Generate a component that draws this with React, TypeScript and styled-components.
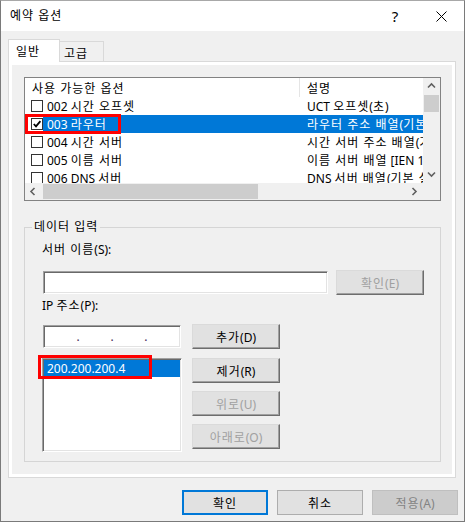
import styled, { createGlobalStyle, css } from "styled-components";

const uiFont = `"Segoe UI", "Noto Sans", "Noto Sans CJK KR", sans-serif`;

const GlobalStyle = createGlobalStyle`
  html, body {
    margin: 0;
    padding: 0;
    background: #f0f0f0;
  }
  body {
    font-family: ${uiFont};
    font-size: 12px;
    color: #000;
  }
  *, *::before, *::after {
    box-sizing: border-box;
  }
`;

// 한글 글자 간격 (맑은 고딕 폭에 맞춤)
const Hangul = styled.span`
  letter-spacing: 1px;
`;

function K({ children }: { children: string }) {
  const parts = children.split(/([가-힣]+(?:\s+[가-힣]+)*)/);
  return <>{parts.map((p, i) => (i % 2 === 1 ? <Hangul key={i}>{p}</Hangul> : p))}</>;
}

// 창 틀
const Window = styled.div`
  display: flex;
  flex-direction: column;
  width: 465px;
  height: 522px;
  background: #f0f0f0;
  border: 1px solid #7a7a7a;
  border-top-color: #a8a8a8;
`;

const TitleBar = styled.div`
  display: flex;
  align-items: center;
  height: 30px;
  padding-left: 9px;
  background: #ffffff;
`;

const Title = styled.span`
  flex: 1;
  line-height: 16px;
`;

const TitleButton = styled.div`
  display: flex;
  align-items: center;
  justify-content: center;
  width: 46px;
  height: 30px;
  font-size: 15px;
`;

const Body = styled.div`
  flex: 1;
  display: flex;
  flex-direction: column;
  padding: 8px 6px 6px 7px;
`;

// 탭
const TabStrip = styled.div`
  display: flex;
  align-items: flex-end;
  height: 22px;
`;

const Tab = styled.div<{ $active?: boolean }>`
  position: relative;
  z-index: 1;
  display: flex;
  align-items: center;
  border: 1px solid #d9d9d9;
  border-bottom: none;

  ${(p) =>
    p.$active
      ? css`
          width: 52px;
          height: 23px;
          margin-bottom: -1px;
          padding-left: 7px;
          background: #ffffff;
        `
      : css`
          width: 44px;
          height: 20px;
          padding: 2px 0 0 4px;
          border-left: none;
          background: #f0f0f0;
        `}
`;

const TabPanel = styled.div`
  flex: 1;
  display: flex;
  margin-right: 2px;
  padding: 3px;
  background: #ffffff;
  border: 1px solid #d9d9d9;
`;

const Page = styled.div`
  flex: 1;
  display: flex;
  flex-direction: column;
  padding: 12px 11px 0 12px;
  background: #f0f0f0;
`;

// 옵션 목록
const ListView = styled.div`
  display: grid;
  grid-template-columns: 1fr 17px;
  grid-template-rows: 1fr 17px;
  width: 417px;
  height: 124px;
  background: #ffffff;
  border: 1px solid #828282;
`;

const ListContent = styled.div`
  min-width: 0;
  min-height: 0;
  overflow: hidden;
`;

const HeaderRow = styled.div`
  display: flex;
  height: 19px;
`;

const HeaderCell = styled.div<{ $width?: number }>`
  display: flex;
  align-items: center;
  padding-left: 7px;
  white-space: nowrap;
  ${(p) =>
    p.$width &&
    css`
      flex: 0 0 ${p.$width}px;
      border-right: 1px solid #e5e5e5;
    `}
`;

const OptionRow = styled.div`
  position: relative;
  display: flex;
  height: 18px;
  white-space: nowrap;
`;

const CheckCell = styled.div`
  display: flex;
  align-items: center;
  flex: 0 0 18px;
  padding-left: 6px;
`;

const CheckBox = styled.div`
  display: flex;
  width: 12px;
  height: 12px;
  background: #ffffff;
  border: 1px solid #333333;
`;

const RowMain = styled.div<{ $selected?: boolean }>`
  flex: 1;
  display: flex;
  align-items: center;
  background: ${(p) => (p.$selected ? "#0078d7" : "transparent")};
  color: ${(p) => (p.$selected ? "#ffffff" : "#000000")};
`;

const NameText = styled.span`
  flex: 0 0 257px;
  padding-left: 4px;
`;

const DescText = styled.span`
  padding-left: 7px;
`;

const Highlight = styled.div<{ $w: number; $h: number; $x: number; $y: number }>`
  position: absolute;
  left: ${(p) => p.$x}px;
  top: ${(p) => p.$y}px;
  width: ${(p) => p.$w}px;
  height: ${(p) => p.$h}px;
  border: 3px solid #ff0000;
  pointer-events: none;
`;

// 스크롤바
const VScroll = styled.div`
  display: flex;
  flex-direction: column;
  background: #f0f0f0;
`;

const HScroll = styled.div`
  display: flex;
  background: #f0f0f0;
`;

const ScrollArrow = styled.div`
  display: flex;
  align-items: center;
  justify-content: center;
  flex: 0 0 17px;
  width: 17px;
  height: 17px;
`;

const ScrollTrack = styled.div`
  flex: 1;
`;

const VThumb = styled.div`
  height: 17px;
  margin: 0 1px;
  background: #cdcdcd;
`;

const HThumb = styled.div`
  width: 215px;
  margin: 1px 0 1px 1px;
  background: #cdcdcd;
`;

const ScrollCorner = styled.div`
  background: #f0f0f0;
`;

// 데이터 입력 그룹
const GroupBox = styled.fieldset`
  min-width: 0;
  margin: 18px 0 0;
  padding: 0 12px 9px 7px;
  border: 1px solid #d5d5d5;
`;

const GroupLegend = styled.legend`
  padding: 0 2px;
  line-height: 16px;
`;

const GroupInner = styled.div`
  display: flex;
  flex-direction: column;
  padding-left: 10px;
`;

const FieldLabel = styled.div<{ $top: number }>`
  margin-top: ${(p) => p.$top}px;
  line-height: 16px;
`;

const FieldRow = styled.div<{ $top: number; $gap: number }>`
  display: flex;
  align-items: center;
  gap: ${(p) => p.$gap}px;
  margin-top: ${(p) => p.$top}px;
`;

const sunken = css`
  background: #ffffff;
  border: 1px solid;
  border-color: #a0a0a0 #ffffff #ffffff #a0a0a0;
  box-shadow: inset 1px 1px 0 #696969, inset -1px -1px 0 #e3e3e3;
`;

const TextInput = styled.div<{ $width: number }>`
  ${sunken}
  width: ${(p) => p.$width}px;
  height: 23px;
  margin-left: 1px;
`;

const IpInput = styled.div`
  ${sunken}
  display: flex;
  align-items: center;
  width: 138px;
  height: 23px;
  margin-left: 1px;
  padding: 0 2px;
`;

const IpSegment = styled.span`
  flex: 1;
`;

const IpDot = styled.span`
  flex: 0 0 3px;
  text-align: center;
  color: #4b2b5b;
  line-height: 14px;
`;

const AddressList = styled.div`
  ${sunken}
  width: 140px;
  height: 94px;
  padding: 1px;
`;

const AddressItem = styled.div`
  position: relative;
  height: 17px;
  padding-left: 3px;
  line-height: 17px;
  background: #0078d7;
  color: #ffffff;
`;

const ButtonColumn = styled.div`
  display: flex;
  flex-direction: column;
  gap: 8px;
  align-self: flex-start;
`;

const PageButton = styled.button`
  width: 88px;
  height: 25px;
  padding: 0;
  font: inherit;
  color: #000000;
  background: #e1e1e1;
  border: 1px solid;
  border-color: #dadada #6d6d6d #6d6d6d #dadada;
  box-shadow: inset -1px -1px 0 #a0a0a0;

  &:disabled {
    color: #a0a0a0;
  }
`;

// 하단 버튼
const Footer = styled.div`
  display: flex;
  justify-content: flex-end;
  gap: 9px;
  margin-top: 12px;
`;

const DialogButton = styled.button<{ $default?: boolean }>`
  width: 86px;
  height: 25px;
  padding: 0;
  font: inherit;
  color: #000000;
  background: #e1e1e1;
  border: 1px solid #adadad;

  ${(p) =>
    p.$default &&
    css`
      border: 2px solid #0078d7;
    `}

  &:disabled {
    color: #838383;
    background: #cccccc;
    border-color: #bfbfbf;
  }
`;

type Dir = "up" | "down" | "left" | "right";

const chevronPaths: Record<Dir, string> = {
  up: "M1 5.5 L4.5 2 L8 5.5",
  down: "M1 2.5 L4.5 6 L8 2.5",
  left: "M5.5 1 L2 4.5 L5.5 8",
  right: "M2.5 1 L6 4.5 L2.5 8",
};

function Chevron({ dir }: { dir: Dir }) {
  return (
    <svg width="9" height="9" viewBox="0 0 9 9">
      <path d={chevronPaths[dir]} fill="none" stroke="#606060" strokeWidth="1.6" />
    </svg>
  );
}

const options = [
  { code: "002 시간 오프셋", desc: "UCT 오프셋(초)" },
  { code: "003 라우터", desc: "라우터 주소 배열(기본 설정 순서)", checked: true, selected: true },
  { code: "004 시간 서버", desc: "시간 서버 주소 배열(기본 설정 순서)" },
  { code: "005 이름 서버", desc: "이름 서버 배열 [IEN 116](기본 설정 순서)" },
  { code: "006 DNS 서버", desc: "DNS 서버 배열(기본 설정 순서)" },
];

function App() {
  return (
    <>
      <GlobalStyle />
      <Window>
        <TitleBar>
          <Title>
            <K>예약 옵션</K>
          </Title>
          <TitleButton>?</TitleButton>
          <TitleButton>
            <svg width="11" height="11" viewBox="0 0 11 11">
              <path d="M0.5 0.5 L10.5 10.5 M10.5 0.5 L0.5 10.5" stroke="#000" strokeWidth="1" />
            </svg>
          </TitleButton>
        </TitleBar>

        <Body>
          <TabStrip>
            <Tab $active>
              <K>일반</K>
            </Tab>
            <Tab>
              <K>고급</K>
            </Tab>
          </TabStrip>

          <TabPanel>
            <Page>
              <ListView>
                <ListContent>
                  <HeaderRow>
                    <HeaderCell $width={275}>
                      <K>사용 가능한 옵션</K>
                    </HeaderCell>
                    <HeaderCell>
                      <K>설명</K>
                    </HeaderCell>
                  </HeaderRow>
                  {options.map((o) => (
                    <OptionRow key={o.code}>
                      <CheckCell>
                        <CheckBox>
                          {o.checked && (
                            <svg width="10" height="10" viewBox="0 0 10 10">
                              <path d="M1.8 5 L4 7.4 L8.4 2.2" fill="none" stroke="#000" strokeWidth="1.8" />
                            </svg>
                          )}
                        </CheckBox>
                      </CheckCell>
                      <RowMain $selected={o.selected}>
                        <NameText>
                          <K>{o.code}</K>
                        </NameText>
                        <DescText>
                          <K>{o.desc}</K>
                        </DescText>
                      </RowMain>
                      {o.selected && <Highlight $x={0} $y={-1} $w={96} $h={20} />}
                    </OptionRow>
                  ))}
                </ListContent>
                <VScroll>
                  <ScrollArrow>
                    <Chevron dir="up" />
                  </ScrollArrow>
                  <VThumb />
                  <ScrollTrack />
                  <ScrollArrow>
                    <Chevron dir="down" />
                  </ScrollArrow>
                </VScroll>
                <HScroll>
                  <ScrollArrow>
                    <Chevron dir="left" />
                  </ScrollArrow>
                  <HThumb />
                  <ScrollTrack />
                  <ScrollArrow>
                    <Chevron dir="right" />
                  </ScrollArrow>
                </HScroll>
                <ScrollCorner />
              </ListView>

              <GroupBox>
                <GroupLegend>
                  <K>데이터 입력</K>
                </GroupLegend>
                <GroupInner>
                  <FieldLabel $top={7}>
                    <K>서버 이름(S):</K>
                  </FieldLabel>
                  <FieldRow $top={12} $gap={8}>
                    <TextInput $width={285} />
                    <PageButton disabled>
                      <K>확인(E)</K>
                    </PageButton>
                  </FieldRow>
                  <FieldLabel $top={3}>
                    <K>IP 주소(P):</K>
                  </FieldLabel>
                  <FieldRow $top={10} $gap={11}>
                    <IpInput>
                      <IpSegment />
                      <IpDot>.</IpDot>
                      <IpSegment />
                      <IpDot>.</IpDot>
                      <IpSegment />
                      <IpDot>.</IpDot>
                      <IpSegment />
                    </IpInput>
                    <PageButton>
                      <K>추가(D)</K>
                    </PageButton>
                  </FieldRow>
                  <FieldRow $top={9} $gap={10}>
                    <AddressList>
                      <AddressItem>
                        200.200.200.4
                        <Highlight $x={-6} $y={-5} $w={114} $h={24} />
                      </AddressItem>
                    </AddressList>
                    <ButtonColumn>
                      <PageButton>
                        <K>제거(R)</K>
                      </PageButton>
                      <PageButton disabled>
                        <K>위로(U)</K>
                      </PageButton>
                      <PageButton disabled>
                        <K>아래로(O)</K>
                      </PageButton>
                    </ButtonColumn>
                  </FieldRow>
                </GroupInner>
              </GroupBox>
            </Page>
          </TabPanel>

          <Footer>
            <DialogButton $default>
              <K>확인</K>
            </DialogButton>
            <DialogButton>
              <K>취소</K>
            </DialogButton>
            <DialogButton disabled>
              <K>적용(A)</K>
            </DialogButton>
          </Footer>
        </Body>
      </Window>
    </>
  );
}

export default App;
